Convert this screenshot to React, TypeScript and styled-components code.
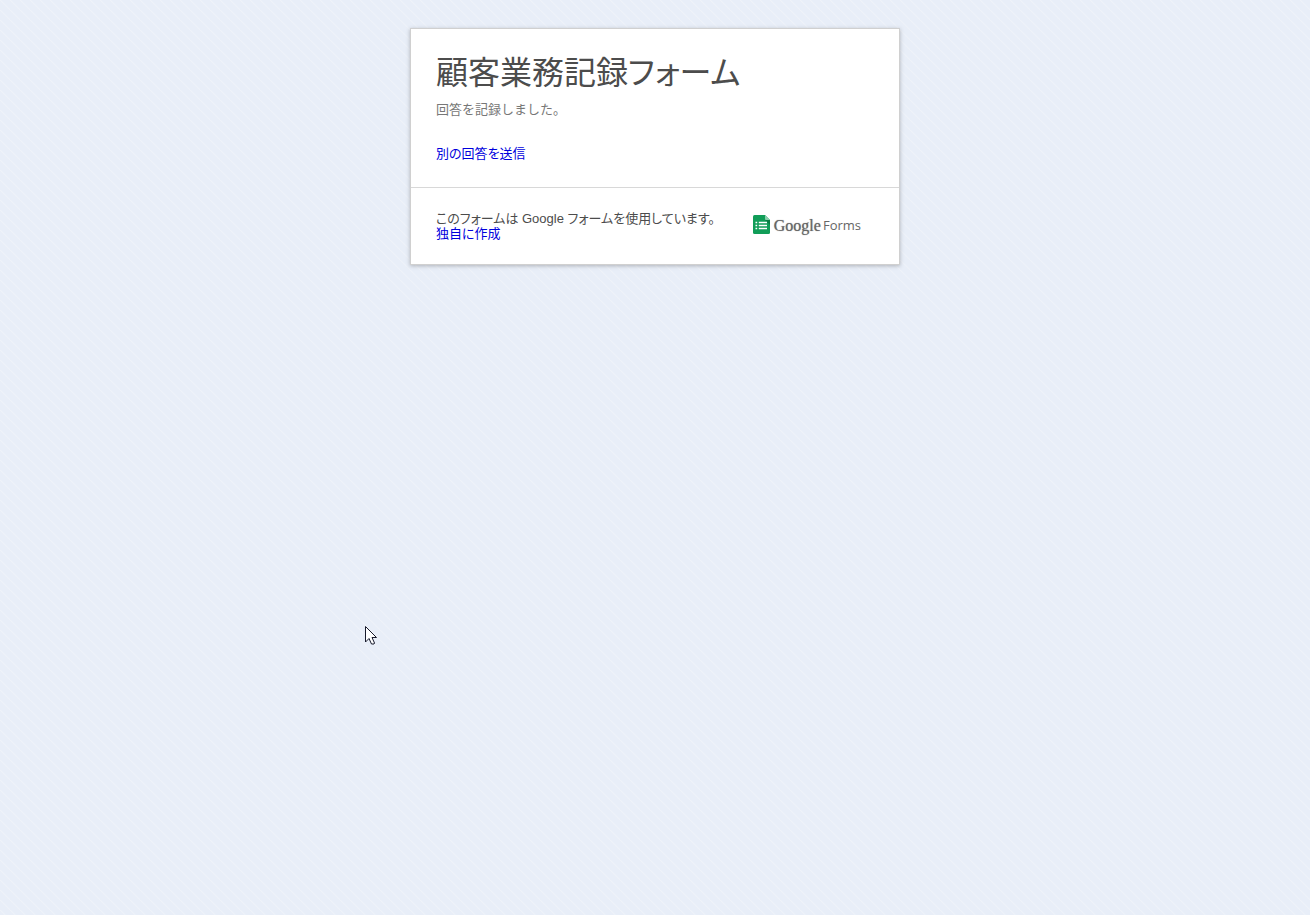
import React from 'react';
import styled, { createGlobalStyle } from 'styled-components';

const GlobalStyle = createGlobalStyle`
  body {
    margin: 0;
    min-height: 100vh;
    color: #4c4c4c;
    font-family: "Liberation Sans", "Noto Sans CJK JP", sans-serif;
    font-size: 13px;
    line-height: 15px;
    font-feature-settings: "palt";
    background-color: #e8eef8;
    background-image: linear-gradient(
      45deg,
      transparent 44%,
      #eff2f8 50%,
      transparent 56%
    );
    background-size: 10px 10px;
  }
`;

const Page = styled.div`
  position: relative;
  min-height: 100vh;
  box-sizing: border-box;
  padding: 28px 16px;
`;

const Card = styled.main`
  max-width: 488px;
  margin: 0 auto;
  background: #fff;
  border: 1px solid #d0d0d0;
  box-shadow: 0 1px 4px rgba(0, 0, 0, 0.25);
`;

const Content = styled.section`
  padding: 24px 25px 26px;
`;

const Title = styled.h1`
  margin: 0;
  font-size: 32px;
  font-weight: 400;
  line-height: 40px;
`;

const Message = styled.p`
  margin: 9px 0 29px;
  color: #777;
  font-feature-settings: normal;
`;

const Link = styled.a`
  display: block;
  color: #00d;
  text-decoration: none;

  &:hover {
    text-decoration: underline;
  }
`;

const Footer = styled.footer`
  display: flex;
  justify-content: space-between;
  align-items: flex-start;
  padding: 23px 38px 23px 25px;
  border-top: 1px solid #d8d8d8;
`;

const Credit = styled.p`
  margin: 0;
`;

const Brand = styled.a`
  display: flex;
  align-items: center;
  margin-top: 4px;
  color: #666;
  line-height: 21px;
  text-decoration: none;
`;

const BrandIcon = styled.svg`
  width: 17px;
  height: 19px;
  margin-right: 4px;
  align-self: flex-start;
`;

const BrandName = styled.span`
  margin-right: 2px;
  font-family: "Liberation Serif", serif;
  font-size: 16px;
  text-shadow: 0 0 1px #888;
`;

const ProductName = styled.span`
  font-family: "Open Sans", sans-serif;
  font-size: 13px;
`;

const Pointer = styled.svg`
  position: absolute;
  left: 365px;
  top: 625px;
  width: 13px;
  height: 21px;
  pointer-events: none;
`;

export default function App() {
  return (
    <>
      <GlobalStyle />
      <Page lang="ja">
        <Card>
          <Content>
            <Title>顧客業務記録フォーム</Title>
            <Message>回答を記録しました。</Message>
            <Link href="#form">別の回答を送信</Link>
          </Content>
          <Footer>
            <div>
              <Credit>このフォームは Google フォームを使用しています。</Credit>
              <Link href="#create">独自に作成</Link>
            </div>
            <Brand href="#forms">
              <BrandIcon viewBox="0 0 17 19" aria-hidden="true">
                <path d="M1.5 0H12L17 5V17.5Q17 19 15.5 19H1.5Q0 19 0 17.5V1.5Q0 0 1.5 0Z" fill="#119d58" />
                <path d="M12 5H17V10Z" fill="#0b7d45" />
                <path d="M12 0L17 5H13Q12 5 12 4Z" fill="#8bcfad" />
                <path d="M2.5 7.5H4.2M2.5 10.5H4.2M2.5 13.5H4.2M5.8 7.5H14M5.8 10.5H14M5.8 13.5H14" stroke="#fff" strokeWidth="1.4" />
              </BrandIcon>
              <BrandName>Google</BrandName>
              <ProductName>Forms</ProductName>
            </Brand>
          </Footer>
        </Card>
        <Pointer viewBox="0 0 13 21" aria-hidden="true">
          <path
            d="M0.5 1.5V17L4 13.5L6.5 19H9L9.5 18L7 12.5H11.5Z"
            fill="#fff"
            stroke="#171a2c"
            strokeWidth="1"
          />
        </Pointer>
      </Page>
    </>
  );
}
